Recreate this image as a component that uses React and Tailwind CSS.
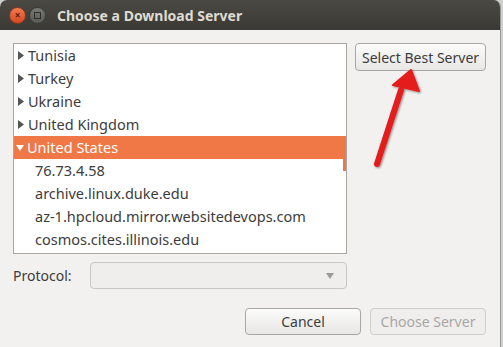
const countries = ["Tunisia", "Turkey", "Ukraine", "United Kingdom"];
const servers = [
  "76.73.4.58",
  "archive.linux.duke.edu",
  "az-1.hpcloud.mirror.websitedevops.com",
  "cosmos.cites.illinois.edu",
];

function Tri({ down, color }) {
  return (
    <svg width="8" height="9" viewBox="0 0 8 9" className="shrink-0">
      {down ? (
        <path d="M0 2 L8 2 L4 8 Z" fill={color} />
      ) : (
        <path d="M1 0 L7 4.5 L1 9 Z" fill={color} />
      )}
    </svg>
  );
}

export default function App() {
  return (
    <div
      className="w-[503px] h-[347px] bg-[#cfcfcf] overflow-hidden relative"
      style={{ fontFamily: '"Noto Sans", "DejaVu Sans", sans-serif' }}
    >
      <div className="w-[501px] h-[347px] bg-[#f2f1f0] rounded-t-[7px] overflow-hidden flex flex-col border-r border-[#9a9a96]">
        {/* title bar */}
        <div className="h-[30px] shrink-0 bg-gradient-to-b from-[#4a4944] to-[#3a3935] flex items-center pl-[9px]">
          <div className="w-[17px] h-[17px] rounded-full bg-gradient-to-b from-[#f27a4f] to-[#d4471f] border border-[#8a3a22] flex items-center justify-center">
            <span className="text-[#5a1c0c] text-[10px] leading-none font-bold">×</span>
          </div>
          <div className="w-[17px] h-[17px] ml-[3px] rounded-full bg-gradient-to-b from-[#7a7a74] to-[#5a5a55] border border-[#3a3a36] flex items-center justify-center">
            <div className="w-[7px] h-[7px] border border-[#2e2e2b]" />
          </div>
          <div className="ml-[11px] text-[#dfdbd2] font-bold text-[14px]">
            Choose a Download Server
          </div>
        </div>

        {/* body */}
        <div className="flex-1 flex flex-col px-[13px] pt-[13px]">
          <div className="flex gap-[8px]">
            <div className="w-[334px] h-[211px] bg-white border border-[#a7a6a4] text-[14.5px] text-[#3c3c3c] relative">
              {countries.map((c) => (
                <div key={c} className="h-[23px] flex items-center pl-[3px] gap-[3px]">
                  <Tri color="#555" />
                  <span>{c}</span>
                </div>
              ))}
              <div className="h-[23px] flex items-center pl-[2px] gap-[3px] bg-[#f07746] text-white">
                <Tri down color="#fff" />
                <span>United States</span>
              </div>
              {servers.map((s) => (
                <div key={s} className="h-[23px] flex items-center pl-[21px]">
                  {s}
                </div>
              ))}
              <div className="absolute right-0 top-[115px] w-[3px] h-[12px] bg-[#f07746]" />
            </div>
            <div>
              <button className="h-[28px] px-[6px] rounded-[4px] border border-[#a8a7a3] bg-gradient-to-b from-[#fbfbfa] to-[#e8e7e5] text-[14px] text-[#3c3c3c]">
                Select Best Server
              </button>
            </div>
          </div>

          <div className="flex items-center mt-[8px]">
            <span className="w-[77px] text-[14px] text-[#3c3c3c]">Protocol:</span>
            <div className="w-[257px] h-[27px] rounded-[4px] border border-[#c8c7c4] bg-[#efeeec] flex items-center justify-end pr-[12px]">
              <Tri down color="#9a9a98" />
            </div>
          </div>

          <div className="flex justify-end gap-[9px] mt-[19px] pr-[1px]">
            <button className="w-[116px] h-[27px] rounded-[4px] border border-[#a8a7a3] bg-gradient-to-b from-[#fbfbfa] to-[#e8e7e5] text-[14px] text-[#3c3c3c]">
              Cancel
            </button>
            <button className="w-[116px] h-[27px] rounded-[4px] border border-[#cfcecb] bg-[#efeeec] text-[14px] text-[#a8a7a5]">
              Choose Server
            </button>
          </div>
        </div>
      </div>

      {/* red annotation arrow */}
      <svg className="absolute left-0 top-0" width="503" height="347" viewBox="0 0 503 347">
        <defs>
          <filter id="sh" x="-20%" y="-20%" width="140%" height="140%">
            <feDropShadow dx="1" dy="1" stdDeviation="1.2" floodColor="#000" floodOpacity="0.45" />
          </filter>
        </defs>
        <g filter="url(#sh)">
          <path d="M377 164 L401 90" stroke="#e41c1c" strokeWidth="6" strokeLinecap="round" />
          <path d="M411 70 L393 85 L419 91 Z" fill="#e41c1c" stroke="#e41c1c" strokeWidth="2" strokeLinejoin="round" />
        </g>
      </svg>
    </div>
  );
}
